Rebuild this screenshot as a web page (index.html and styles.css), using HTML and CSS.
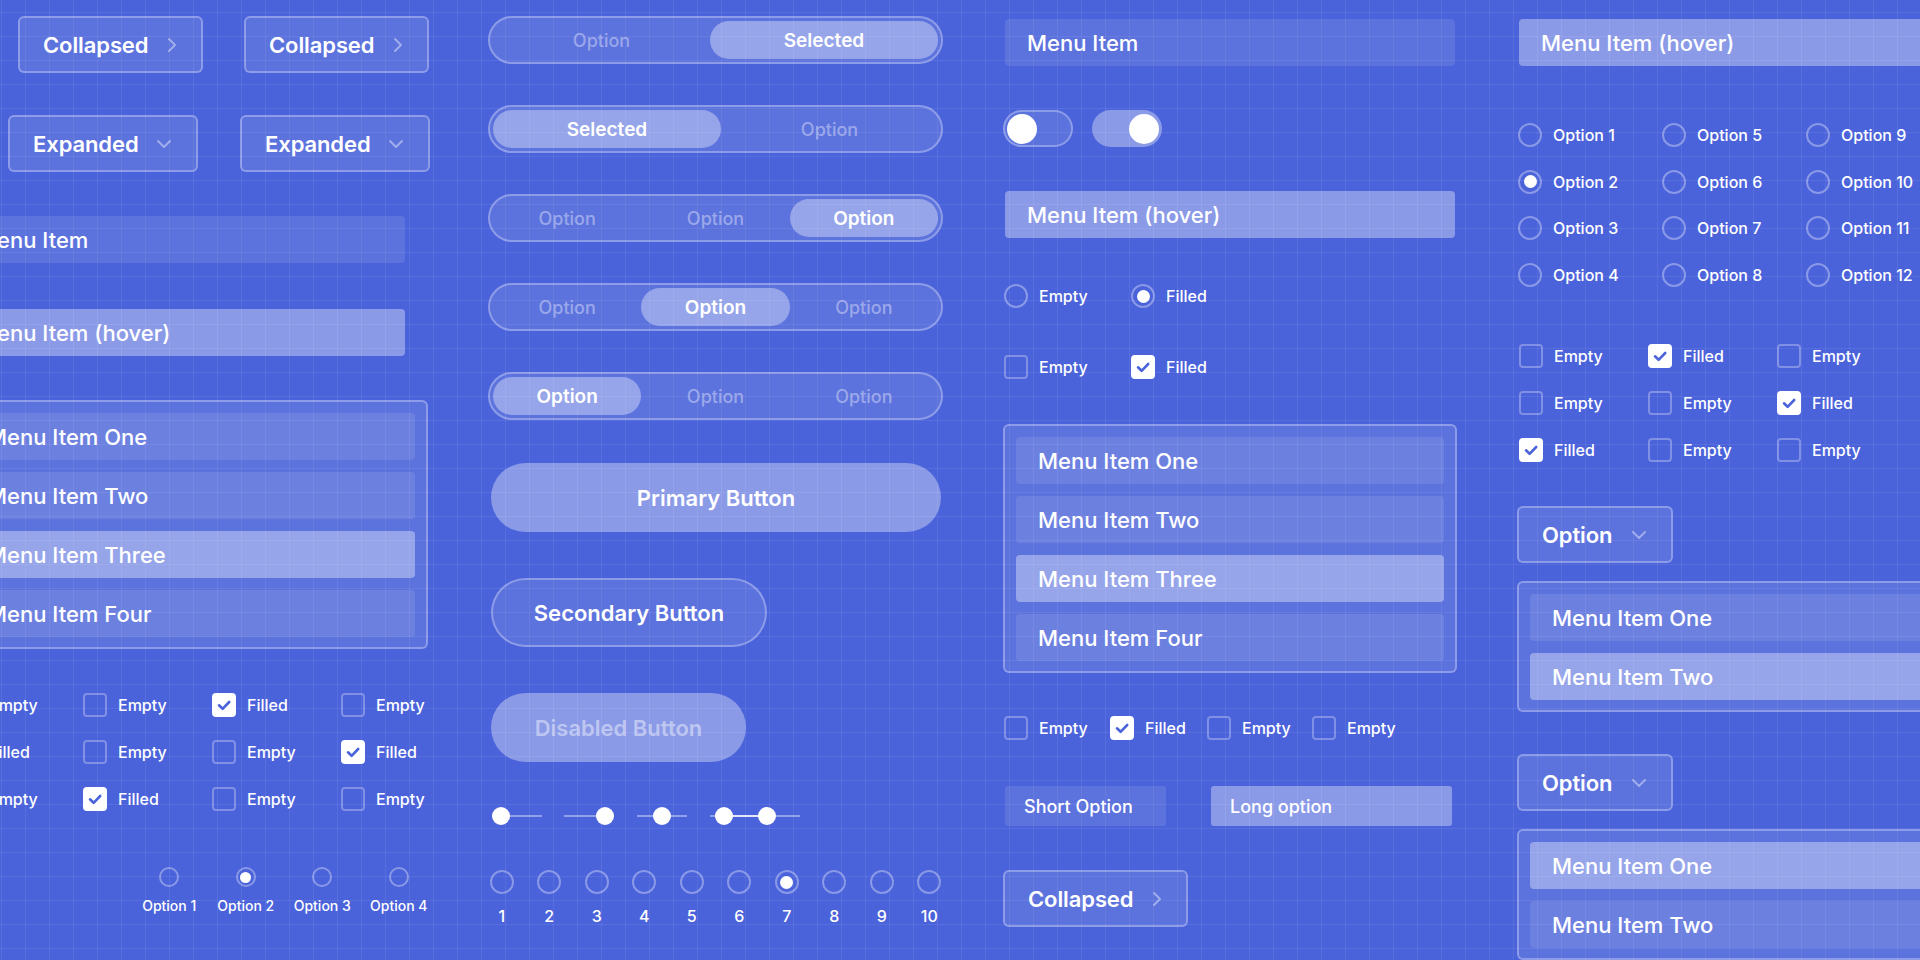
FILE: index.html
```html
<!DOCTYPE html>
<html>
<head>
<meta charset="utf-8">
<link rel="stylesheet" href="styles.css">
</head>
<body>
<div class="canvas">

  <!-- Column 1 -->
  <div class="col col1">
    <div class="row c1-collapsed">
      <div class="drop drop-c"><span>Collapsed</span><svg class="chev-r" width="10" height="16" viewBox="0 0 10 16"><path d="M2 2l6 6-6 6"/></svg></div>
      <div class="drop drop-c"><span>Collapsed</span><svg class="chev-r" width="10" height="16" viewBox="0 0 10 16"><path d="M2 2l6 6-6 6"/></svg></div>
    </div>
    <div class="row c1-expanded">
      <div class="drop drop-e"><span>Expanded</span><svg class="chev-d" width="16" height="10" viewBox="0 0 16 10"><path d="M2 2l6 6 6-6"/></svg></div>
      <div class="drop drop-e"><span>Expanded</span><svg class="chev-d" width="16" height="10" viewBox="0 0 16 10"><path d="M2 2l6 6 6-6"/></svg></div>
    </div>
    <div class="bar c1-bar">Menu Item</div>
    <div class="bar hover c1-hover">Menu Item (hover)</div>
    <div class="list list4 c1-list">
      <div class="item">Menu Item One</div>
      <div class="item">Menu Item Two</div>
      <div class="item sel">Menu Item Three</div>
      <div class="item">Menu Item Four</div>
    </div>
    <div class="cb-grid cbg4 c1-cbg">
      <div class="cb-cell"><span class="cb"></span><span class="lbl">Empty</span></div>
      <div class="cb-cell"><span class="cb"></span><span class="lbl">Empty</span></div>
      <div class="cb-cell"><span class="cb on"><svg width="24" height="24" viewBox="0 0 24 24"><path d="M7 12.3l3.6 3.5L17.2 9"/></svg></span><span class="lbl">Filled</span></div>
      <div class="cb-cell"><span class="cb"></span><span class="lbl">Empty</span></div>

      <div class="cb-cell"><span class="cb on"><svg width="24" height="24" viewBox="0 0 24 24"><path d="M7 12.3l3.6 3.5L17.2 9"/></svg></span><span class="lbl">Filled</span></div>
      <div class="cb-cell"><span class="cb"></span><span class="lbl">Empty</span></div>
      <div class="cb-cell"><span class="cb"></span><span class="lbl">Empty</span></div>
      <div class="cb-cell"><span class="cb on"><svg width="24" height="24" viewBox="0 0 24 24"><path d="M7 12.3l3.6 3.5L17.2 9"/></svg></span><span class="lbl">Filled</span></div>

      <div class="cb-cell"><span class="cb"></span><span class="lbl">Empty</span></div>
      <div class="cb-cell"><span class="cb on"><svg width="24" height="24" viewBox="0 0 24 24"><path d="M7 12.3l3.6 3.5L17.2 9"/></svg></span><span class="lbl">Filled</span></div>
      <div class="cb-cell"><span class="cb"></span><span class="lbl">Empty</span></div>
      <div class="cb-cell"><span class="cb"></span><span class="lbl">Empty</span></div>
    </div>
    <div class="row c1-radios">
      <div class="rcol"><span class="radio sm"></span><span class="rlbl-sm">Option 1</span></div>
      <div class="rcol"><span class="radio sm on"></span><span class="rlbl-sm">Option 2</span></div>
      <div class="rcol"><span class="radio sm"></span><span class="rlbl-sm">Option 3</span></div>
      <div class="rcol"><span class="radio sm"></span><span class="rlbl-sm">Option 4</span></div>
    </div>
  </div>

  <!-- Column 2 -->
  <div class="col col2">
    <div class="seg seg2">
      <div class="opt">Option</div>
      <div class="opt sel">Selected</div>
    </div>
    <div class="seg seg2">
      <div class="opt sel">Selected</div>
      <div class="opt">Option</div>
    </div>
    <div class="seg seg3">
      <div class="opt">Option</div>
      <div class="opt">Option</div>
      <div class="opt sel">Option</div>
    </div>
    <div class="seg seg3">
      <div class="opt">Option</div>
      <div class="opt sel">Option</div>
      <div class="opt">Option</div>
    </div>
    <div class="seg seg3">
      <div class="opt sel">Option</div>
      <div class="opt">Option</div>
      <div class="opt">Option</div>
    </div>
    <div class="pbtn primary">Primary Button</div>
    <div class="pbtn secondary">Secondary Button</div>
    <div class="pbtn disabled">Disabled Button</div>
    <div class="row sliders">
      <div class="slider s1"><span class="track"></span><span class="thumb" style="left:0px"></span></div>
      <div class="slider s2"><span class="track"></span><span class="thumb" style="left:32px"></span></div>
      <div class="slider s3"><span class="track"></span><span class="thumb" style="left:16px"></span></div>
      <div class="slider s4"><span class="track"></span><span class="range" style="left:14px;width:43px"></span><span class="thumb" style="left:5px"></span><span class="thumb" style="left:48px"></span></div>
    </div>
    <div class="row nums">
      <div class="ncol"><span class="radio"></span><span class="nlbl">1</span></div>
      <div class="ncol"><span class="radio"></span><span class="nlbl">2</span></div>
      <div class="ncol"><span class="radio"></span><span class="nlbl">3</span></div>
      <div class="ncol"><span class="radio"></span><span class="nlbl">4</span></div>
      <div class="ncol"><span class="radio"></span><span class="nlbl">5</span></div>
      <div class="ncol"><span class="radio"></span><span class="nlbl">6</span></div>
      <div class="ncol"><span class="radio on"></span><span class="nlbl">7</span></div>
      <div class="ncol"><span class="radio"></span><span class="nlbl">8</span></div>
      <div class="ncol"><span class="radio"></span><span class="nlbl">9</span></div>
      <div class="ncol"><span class="radio"></span><span class="nlbl">10</span></div>
    </div>
  </div>

  <!-- Column 3 -->
  <div class="col col3">
    <div class="bar c3-bar">Menu Item</div>
    <div class="row toggles">
      <div class="toggle"><span class="knob"></span></div>
      <div class="toggle on"><span class="knob"></span></div>
    </div>
    <div class="bar hover c3-hover">Menu Item (hover)</div>
    <div class="row pair c3-radios">
      <div class="pcell"><span class="radio"></span><span class="lbl">Empty</span></div>
      <div class="pcell"><span class="radio on"></span><span class="lbl">Filled</span></div>
    </div>
    <div class="row pair c3-cbs">
      <div class="pcell"><span class="cb"></span><span class="lbl">Empty</span></div>
      <div class="pcell"><span class="cb on"><svg width="24" height="24" viewBox="0 0 24 24"><path d="M7 12.3l3.6 3.5L17.2 9"/></svg></span><span class="lbl">Filled</span></div>
    </div>
    <div class="list list4 c3-list">
      <div class="item">Menu Item One</div>
      <div class="item">Menu Item Two</div>
      <div class="item sel">Menu Item Three</div>
      <div class="item">Menu Item Four</div>
    </div>
    <div class="row c3-cbrow">
      <div class="qcell"><span class="cb"></span><span class="lbl">Empty</span></div>
      <div class="qcell q2"><span class="cb on"><svg width="24" height="24" viewBox="0 0 24 24"><path d="M7 12.3l3.6 3.5L17.2 9"/></svg></span><span class="lbl">Filled</span></div>
      <div class="qcell q3"><span class="cb"></span><span class="lbl">Empty</span></div>
      <div class="qcell q4"><span class="cb"></span><span class="lbl">Empty</span></div>
    </div>
    <div class="row chips">
      <div class="chip short">Short Option</div>
      <div class="chip long">Long option</div>
    </div>
    <div class="drop drop-c c3-collapsed"><span>Collapsed</span><svg class="chev-r" width="10" height="16" viewBox="0 0 10 16"><path d="M2 2l6 6-6 6"/></svg></div>
  </div>

  <!-- Column 4 -->
  <div class="col col4">
    <div class="bar hover c4-hover">Menu Item (hover)</div>
    <div class="rgrid">
      <div class="rg-cell"><span class="radio"></span><span class="lbl">Option 1</span></div>
      <div class="rg-cell"><span class="radio"></span><span class="lbl">Option 5</span></div>
      <div class="rg-cell"><span class="radio"></span><span class="lbl">Option 9</span></div>
      <div class="rg-cell"><span class="radio on"></span><span class="lbl">Option 2</span></div>
      <div class="rg-cell"><span class="radio"></span><span class="lbl">Option 6</span></div>
      <div class="rg-cell"><span class="radio"></span><span class="lbl">Option 10</span></div>
      <div class="rg-cell"><span class="radio"></span><span class="lbl">Option 3</span></div>
      <div class="rg-cell"><span class="radio"></span><span class="lbl">Option 7</span></div>
      <div class="rg-cell"><span class="radio"></span><span class="lbl">Option 11</span></div>
      <div class="rg-cell"><span class="radio"></span><span class="lbl">Option 4</span></div>
      <div class="rg-cell"><span class="radio"></span><span class="lbl">Option 8</span></div>
      <div class="rg-cell"><span class="radio"></span><span class="lbl">Option 12</span></div>
    </div>
    <div class="cb-grid cbg3 c4-cbg">
      <div class="cb-cell"><span class="cb"></span><span class="lbl">Empty</span></div>
      <div class="cb-cell"><span class="cb on"><svg width="24" height="24" viewBox="0 0 24 24"><path d="M7 12.3l3.6 3.5L17.2 9"/></svg></span><span class="lbl">Filled</span></div>
      <div class="cb-cell"><span class="cb"></span><span class="lbl">Empty</span></div>

      <div class="cb-cell"><span class="cb"></span><span class="lbl">Empty</span></div>
      <div class="cb-cell"><span class="cb"></span><span class="lbl">Empty</span></div>
      <div class="cb-cell"><span class="cb on"><svg width="24" height="24" viewBox="0 0 24 24"><path d="M7 12.3l3.6 3.5L17.2 9"/></svg></span><span class="lbl">Filled</span></div>

      <div class="cb-cell"><span class="cb on"><svg width="24" height="24" viewBox="0 0 24 24"><path d="M7 12.3l3.6 3.5L17.2 9"/></svg></span><span class="lbl">Filled</span></div>
      <div class="cb-cell"><span class="cb"></span><span class="lbl">Empty</span></div>
      <div class="cb-cell"><span class="cb"></span><span class="lbl">Empty</span></div>
    </div>
    <div class="drop drop-o c4-drop1"><span>Option</span><svg class="chev-d" width="16" height="10" viewBox="0 0 16 10"><path d="M2 2l6 6 6-6"/></svg></div>
    <div class="list list2 c4-list">
      <div class="item">Menu Item One</div>
      <div class="item sel">Menu Item Two</div>
    </div>
    <div class="drop drop-o c4-drop2"><span>Option</span><svg class="chev-d" width="16" height="10" viewBox="0 0 16 10"><path d="M2 2l6 6 6-6"/></svg></div>
    <div class="list list2 c4-list">
      <div class="item sel">Menu Item One</div>
      <div class="item">Menu Item Two</div>
    </div>
  </div>

</div>
</body>
</html>
```

FILE: styles.css
```css
* { box-sizing: border-box; }
html, body { margin: 0; padding: 0; }
body {
  width: 1920px;
  height: 960px;
  overflow: hidden;
  background: #4a62da;
  font-family: Inter, "Noto Sans", sans-serif;
  color: #fff;
}

.canvas {
  width: 1920px;
  height: 960px;
  overflow: hidden;
  display: flex;
  gap: 60px;
  background-color: #4a62da;
  background-image:
    linear-gradient(to right, rgba(255,255,255,0.075) 1px, transparent 1px),
    linear-gradient(to bottom, rgba(255,255,255,0.075) 1px, transparent 1px);
  background-size: 24px 24px;
  background-position: 1px 12px;
}

.col { flex: none; display: flex; flex-direction: column; align-items: flex-start; }
.col1 { width: 476px; margin-left: -48px; padding-top: 16px; }
.col2 { width: 455px; padding-top: 16px; }
.col3 { width: 454px; padding-top: 19px; }
.col4 { width: 454px; padding-top: 19px; }

.row { display: flex; align-items: center; flex: none; }

/* dropdown style buttons */
.drop {
  flex: none;
  height: 57px;
  display: flex;
  align-items: center;
  justify-content: space-between;
  padding: 0 24px 0 23px;
  border: 2px solid rgba(255,255,255,0.3);
  border-radius: 6px;
  background: rgba(255,255,255,0.1);
  font-size: 22px;
  font-weight: 600;
  letter-spacing: -0.1px;
}
.drop-c { width: 185px; }
.drop-e { width: 190px; }
.drop-o { width: 156px; padding-left: 23px; }
.drop svg { flex: none; fill: none; stroke: rgba(255,255,255,0.42); stroke-width: 2; stroke-linecap: round; stroke-linejoin: round; }

.c1-collapsed { margin-left: 66px; gap: 41px; }
.c1-expanded { margin-left: 56px; gap: 42px; margin-top: 42px; }

/* menu bars */
.bar {
  flex: none;
  width: 450px;
  height: 47px;
  display: flex;
  align-items: center;
  padding-left: 22px;
  border-radius: 4px;
  background: rgba(255,255,255,0.1);
  font-size: 22px;
  font-weight: 500;
  white-space: nowrap;
}
.bar.hover { background: rgba(255,255,255,0.36); }
.c1-bar { margin-left: 3px; margin-top: 44px; }
.c1-hover { margin-left: 3px; margin-top: 46px; }
.c3-bar { margin-left: 2px; }
.c3-hover { margin-left: 2px; margin-top: 44px; }
.c4-hover { margin-left: 2px; }

/* lists */
.list {
  flex: none;
  border: 2px solid rgba(255,255,255,0.3);
  border-radius: 6px;
  background: rgba(255,255,255,0.1);
  padding: 11px 11px 10px 11px;
  display: flex;
  flex-direction: column;
  gap: 12px;
}
.list4 { width: 454px; }
.col1 .list4 { width: 476px; }
.list2 { width: 460px; }
.item {
  height: 47px;
  display: flex;
  align-items: center;
  padding-left: 22px;
  border-radius: 4px;
  background: rgba(255,255,255,0.1);
  font-size: 22px;
  font-weight: 500;
  white-space: nowrap;
}
.item.sel { background: rgba(255,255,255,0.36); }
.c1-list { margin-top: 44px; }
.c3-list { margin-top: 45px; }
.c4-list { margin-top: 18px; }

/* checkboxes */
.cb {
  flex: none;
  width: 24px;
  height: 24px;
  border: 2px solid rgba(255,255,255,0.3);
  border-radius: 4px;
  display: inline-flex;
  align-items: center;
  justify-content: center;
}
.cb.on { background: #fff; border-color: #fff; }
.cb svg { flex: none; fill: none; stroke: #4a62da; stroke-width: 2.6; stroke-linecap: round; stroke-linejoin: round; }
.lbl { font-size: 16px; font-weight: 500; white-space: nowrap; }

.cb-grid { display: grid; row-gap: 23px; flex: none; }
.cbg4 { grid-template-columns: repeat(4, 129px); }
.cbg3 { grid-template-columns: repeat(3, 129px); }
.cb-cell { display: flex; align-items: center; gap: 11px; height: 24px; }
.c1-cbg { margin-left: 2px; margin-top: 44px; }
.c4-cbg { margin-left: 2px; margin-top: 57px; }

/* radios */
.radio {
  flex: none;
  width: 24px;
  height: 24px;
  border: 2px solid rgba(255,255,255,0.35);
  border-radius: 50%;
  display: inline-flex;
  align-items: center;
  justify-content: center;
}
.radio.on::after { content: ""; width: 13px; height: 13px; border-radius: 50%; background: #fff; }
.radio.sm { width: 20px; height: 20px; }
.radio.sm.on::after { width: 11px; height: 11px; }

.c1-radios { margin-left: 179px; margin-top: 56px; align-items: flex-start; }
.rcol { width: 76.5px; display: flex; flex-direction: column; align-items: center; gap: 10px; }
.rlbl-sm { font-size: 14px; font-weight: 500; line-height: 17px; white-space: nowrap; }

/* segmented controls */
.seg {
  flex: none;
  width: 455px;
  height: 48px;
  border: 2px solid rgba(255,255,255,0.3);
  border-radius: 24px;
  background: rgba(255,255,255,0.1);
  padding: 3px;
  display: flex;
  margin-bottom: 41px;
}
.opt {
  flex: 1 1 0;
  border-radius: 19px;
  display: flex;
  align-items: center;
  justify-content: center;
  font-size: 18px;
  font-weight: 500;
  color: rgba(255,255,255,0.4);
}
.opt.sel { background: rgba(255,255,255,0.36); color: #fff; font-weight: 600; font-size: 19px; }
.seg2 .opt.sel { flex: 0 0 228px; }

/* pill buttons */
.pbtn {
  flex: none;
  height: 69px;
  border-radius: 35px;
  display: flex;
  align-items: center;
  justify-content: center;
  font-size: 22px;
  font-weight: 600;
  margin-left: 3px;
}
.primary { width: 450px; background: rgba(255,255,255,0.36); margin-top: 2px; }
.secondary { width: 276px; margin-top: 46px; border: 2px solid rgba(255,255,255,0.3); background: rgba(255,255,255,0.1); }
.disabled { width: 255px; margin-top: 46px; background: rgba(255,255,255,0.36); color: rgba(255,255,255,0.45); }

/* sliders */
.sliders { margin-top: 45px; margin-left: 4px; gap: 22px; height: 18px; }
.slider { position: relative; height: 18px; flex: none; }
.s1, .s2 { width: 50px; }
.s3 { width: 50px; margin-left: 1px; }
.s4 { width: 90px; margin-left: 1px; }
.slider .track { position: absolute; left: 0; right: 0; top: 8px; height: 2px; background: rgba(255,255,255,0.4); }
.slider .range { position: absolute; top: 8px; height: 2px; background: rgba(255,255,255,0.75); }
.slider .thumb { position: absolute; top: 0; width: 18px; height: 18px; border-radius: 50%; background: #fff; }

/* numbered radios */
.nums { margin-top: 45px; margin-left: -10px; align-items: flex-start; }
.ncol { width: 47.5px; display: flex; flex-direction: column; align-items: center; gap: 12px; }
.nlbl { font-size: 16px; font-weight: 500; line-height: 20px; }

/* toggles */
.toggles { margin-top: 44px; gap: 19px; }
.toggle {
  flex: none;
  width: 70px;
  height: 37px;
  border: 2px solid rgba(255,255,255,0.3);
  border-radius: 19px;
  background: rgba(255,255,255,0.1);
  display: flex;
  align-items: center;
  padding: 0 2px;
}
.toggle.on { border-color: transparent; background: rgba(255,255,255,0.36); justify-content: flex-end; padding: 0 1px; }
.knob { width: 30px; height: 30px; border-radius: 50%; background: #fff; }

/* pairs */
.pair { margin-left: 1px; }
.pcell { width: 127px; display: flex; align-items: center; gap: 11px; height: 24px; }
.c3-radios { margin-top: 46px; }
.c3-cbs { margin-top: 47px; margin-left: 1px; }

.c3-cbrow { margin-top: 43px; margin-left: 1px; }
.qcell { display: flex; align-items: center; gap: 11px; height: 24px; flex: none; }
.qcell:nth-child(1) { width: 106px; }
.qcell:nth-child(2) { width: 97px; }
.qcell:nth-child(3) { width: 105px; }

/* chips */
.chips { margin-top: 46px; margin-left: 2px; gap: 45px; }
.chip {
  flex: none;
  height: 40px;
  display: flex;
  align-items: center;
  padding-left: 19px;
  border-radius: 3px;
  font-size: 18px;
  font-weight: 500;
}
.chip.short { width: 161px; background: rgba(255,255,255,0.1); }
.chip.long { width: 241px; background: rgba(255,255,255,0.36); }
.c3-collapsed { margin-top: 44px; }

/* column 4 radio grid */
.rgrid {
  display: grid;
  grid-template-columns: repeat(3, 144px);
  row-gap: 22.7px;
  margin-top: 57px;
  margin-left: 1px;
}
.rg-cell { display: flex; align-items: center; gap: 11px; height: 24px; }
.c4-drop1 { margin-top: 44px; }
.c4-drop2 { margin-top: 42px; }
```
